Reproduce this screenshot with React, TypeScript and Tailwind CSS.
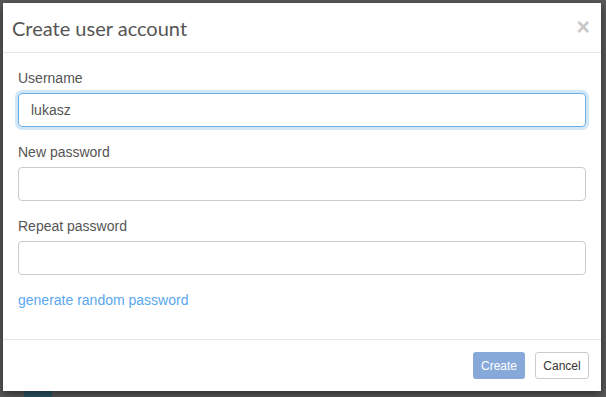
export default function App() {
  return (
    <div className="relative h-[397px] w-[606px] overflow-hidden bg-[#595959] font-['Liberation_Sans',Arial,sans-serif] text-[14px] text-[#555]">
      <div className="absolute left-[24px] top-[391px] h-[10px] w-[28px] bg-[#2c5566]" />
      <div className="relative ml-[3px] mt-[3px] flex h-[388px] w-[598px] flex-col bg-white shadow-[0_3px_9px_rgba(0,0,0,0.5)]">
        <div className="flex h-[50px] items-center justify-between border-b border-[#e5e5e5] pl-[9px] pr-[11px]">
          <h4 className="font-['Lato',sans-serif] text-[20px] leading-none text-[#555]">Create user account</h4>
          <span className="text-[23px] font-bold leading-none text-[#c8c8c8]">×</span>
        </div>
        <div className="flex-1 px-[15px] pt-[15px]">
          <div className="mb-[15px]">
            <label className="mb-[5px] block leading-[20px]">Username</label>
            <div className="flex h-[34px] items-center rounded-[4px] border border-[#66afe9] px-[12px] shadow-[0_0_0_3px_rgba(102,175,233,0.3)]">
              lukasz
            </div>
          </div>
          <div className="mb-[15px]">
            <label className="mb-[5px] block leading-[20px]">New password</label>
            <div className="h-[34px] rounded-[4px] border border-[#ccc]" />
          </div>
          <div className="mb-[15px]">
            <label className="mb-[5px] block leading-[20px]">Repeat password</label>
            <div className="h-[34px] rounded-[4px] border border-[#ccc]" />
          </div>
          <a className="block leading-[20px] text-[#5aa8ef]">generate random password</a>
        </div>
        <div className="flex h-[52px] items-center justify-end gap-[10px] border-t border-[#e5e5e5] pr-[12px]">
          <button className="h-[27px] w-[52px] rounded-[3px] bg-[#86a9d9] text-[12px] text-white">Create</button>
          <button className="h-[27px] w-[54px] rounded-[3px] border border-[#ccc] bg-white text-[12px] text-[#333]">Cancel</button>
        </div>
      </div>
    </div>
  );
}
